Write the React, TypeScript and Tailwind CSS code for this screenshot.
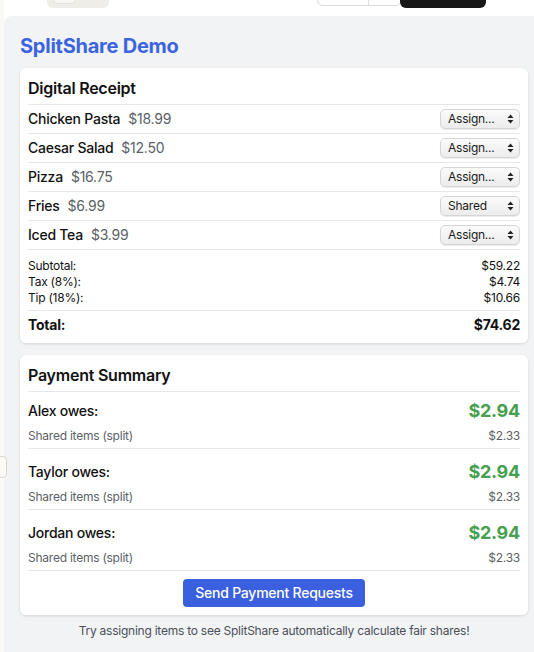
import React from "react";

const items = [
  { name: "Chicken Pasta", price: "$18.99", assign: "Assign..." },
  { name: "Caesar Salad", price: "$12.50", assign: "Assign..." },
  { name: "Pizza", price: "$16.75", assign: "Assign..." },
  { name: "Fries", price: "$6.99", assign: "Shared" },
  { name: "Iced Tea", price: "$3.99", assign: "Assign..." },
];

const people = ["Alex", "Taylor", "Jordan"];

function FakeSelect({ label }: { label: string }) {
  return (
    <div className="flex items-center justify-between w-[80px] h-[20px] pl-[7px] pr-[5px] rounded-[5px] border border-[#d4d4d4] bg-gradient-to-b from-[#fbfbfb] to-[#ececec] shadow-[0_1px_1px_rgba(0,0,0,0.08)] text-[12px] text-[#1a1a1a]">
      <span>{label}</span>
      <svg width="7" height="10" viewBox="0 0 7 10">
        <path d="M3.5 0.5 L6.5 4 L0.5 4 Z" fill="#222" />
        <path d="M3.5 9.5 L6.5 6 L0.5 6 Z" fill="#222" />
      </svg>
    </div>
  );
}

export default function App() {
  return (
    <div className="relative w-[534px] h-[652px] overflow-hidden flex bg-white font-['Inter',sans-serif] tracking-[-0.015em] text-[#111]">
      {/* left gutter */}
      <div className="w-[4px] shrink-0 bg-[#faf9f6]" />

      {/* drag handle */}
      <div className="absolute left-[-3px] top-[456px] w-[10px] h-[22px] rounded-[4px] border border-[#d9d6cf] bg-[#fcfbf8]" />

      <div className="flex flex-col flex-1 min-w-0">
        {/* cut-off toolbar */}
        <div className="relative h-[16px] shrink-0 bg-white">
          <div className="absolute left-[43px] top-[-10px] w-[62px] h-[18px] rounded-[6px] bg-[#efede7]">
            <div className="ml-[6px] w-[23px] h-[14px] rounded-[4px] bg-[#f8f7f4] border border-[#e4e1da]" />
          </div>
          <div className="absolute left-[313px] top-[-10px] w-[85px] h-[16px] rounded-[6px] border border-[#dcdcdc] bg-white flex">
            <div className="w-[51px] border-r border-[#dcdcdc]" />
          </div>
          <div className="absolute left-[396px] top-[-10px] w-[86px] h-[18px] rounded-[6px] bg-[#171717]" />
        </div>

        {/* demo panel */}
        <div className="w-[540px] shrink-0 flex-1 bg-[#f2f3f5] rounded-tl-[8px] px-4 pt-4">
          <h1 className="text-[20px] leading-7 font-bold text-[#3b64e0] mb-2">SplitShare Demo</h1>

          <div className="flex flex-col gap-3">
            {/* receipt */}
            <div className="bg-white rounded-[6px] shadow-[0_1px_3px_rgba(0,0,0,0.12)] p-2">
              <h2 className="text-[16px] leading-6 font-semibold border-b border-[#e5e7eb] pb-1">Digital Receipt</h2>
              {items.map((it) => (
                <div key={it.name} className="flex items-center justify-between py-1 border-b border-[#e5e7eb]">
                  <div className="flex items-baseline gap-[8px] text-[14px] leading-5">
                    <span className="font-medium">{it.name}</span>
                    <span className="text-[#5b5f66]">{it.price}</span>
                  </div>
                  <FakeSelect label={it.assign} />
                </div>
              ))}
              <div className="pt-2 pb-1 border-b border-[#e5e7eb] text-[12px] leading-4">
                <div className="flex justify-between"><span>Subtotal:</span><span>$59.22</span></div>
                <div className="flex justify-between"><span>Tax (8%):</span><span>$4.74</span></div>
                <div className="flex justify-between"><span>Tip (18%):</span><span>$10.66</span></div>
              </div>
              <div className="flex justify-between pt-1 text-[14px] leading-5 font-bold">
                <span>Total:</span>
                <span>$74.62</span>
              </div>
            </div>

            {/* payment summary */}
            <div className="bg-white rounded-[6px] shadow-[0_1px_3px_rgba(0,0,0,0.12)] p-2">
              <h2 className="text-[16px] leading-6 font-semibold border-b border-[#e5e7eb] pb-1">Payment Summary</h2>
              {people.map((p, i) => (
                <div key={p} className={`${i === 0 ? "pt-1" : "pt-2"} pb-1 border-b border-[#e5e7eb]`}>
                  <div className="flex items-center justify-between h-7">
                    <span className="text-[14px] font-medium">{p} owes:</span>
                    <span className="text-[18px] font-bold text-[#47a04f]">$2.94</span>
                  </div>
                  <div className="flex justify-between mt-1 text-[12px] leading-4 text-[#5b5f66]">
                    <span>Shared items (split)</span>
                    <span>$2.33</span>
                  </div>
                </div>
              ))}
              <div className="flex justify-center mt-2">
                <button className="bg-[#3a60e0] text-white text-[14px] leading-5 font-medium whitespace-nowrap px-3 py-1 rounded-[4px]">
                  Send Payment Requests
                </button>
              </div>
            </div>
          </div>

          <p className="w-[508px] text-center mt-2 text-[12px] leading-4 text-[#4b5058]">
            Try assigning items to see SplitShare automatically calculate fair shares!
          </p>
        </div>
      </div>
    </div>
  );
}
